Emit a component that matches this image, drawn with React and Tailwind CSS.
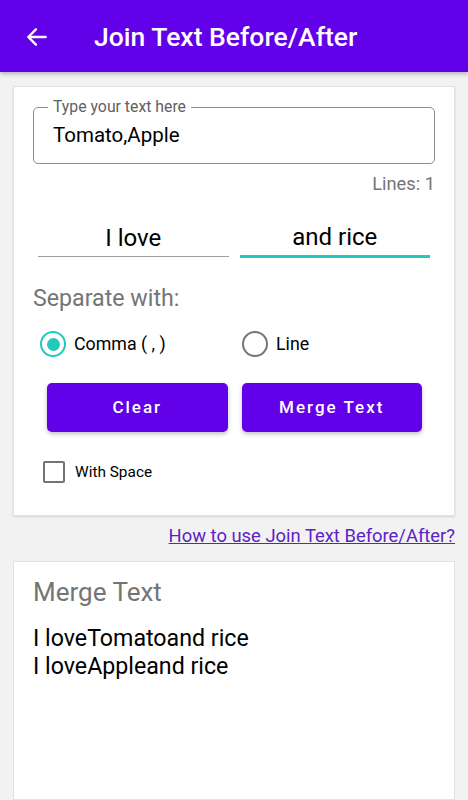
import React from "react";

export default function App() {
  const font = { fontFamily: "Roboto, 'Noto Sans', sans-serif" };
  return (
    <div className="w-[468px] h-[800px] overflow-hidden bg-[#f2f2f2] flex flex-col" style={font}>
      <header className="h-[72px] shrink-0 bg-[#6200ea] flex items-center shadow-[0_2px_4px_rgba(0,0,0,0.25)] relative z-10">
        <svg className="ml-[24px] mt-[1px]" width="26" height="26" viewBox="0 0 24 24" fill="none" stroke="white" strokeWidth="2.2" strokeLinecap="round" strokeLinejoin="round">
          <path d="M20 12H4.5" />
          <path d="M11 5l-7 7 7 7" />
        </svg>
        <h1 className="ml-[44px] mt-[2px] text-white text-[26.5px] font-medium">Join Text Before/After</h1>
      </header>

      <div className="mx-[13px] mt-[14px] bg-white border border-[#e2e2e2] shadow-[0_1px_2px_rgba(0,0,0,0.12)] px-[19px] pt-[20px] pb-[31px]">
        <fieldset className="border border-[#8c8c8c] rounded-[5px] h-[67px] px-[14px] -mt-[10px]">
          <legend className="px-[5px] text-[15.8px] text-[#616161] leading-[20px]">Type your text here</legend>
          <div className="text-[20.5px] text-black leading-[24px] mt-[6px] ml-[5px]">Tomato,Apple</div>
        </fieldset>
        <div className="text-right text-[18.3px] text-[#757575] mt-[8px] leading-[24px]">Lines: 1</div>

        <div className="flex gap-[11px] mt-[23px] px-[5px]">
          <div className="flex-1 border-b border-[#9e9e9e] h-[38px] flex items-center justify-center text-[24px] text-black">I love</div>
          <div className="flex-1 border-b-[3px] border-[#22c9bd] h-[39px] flex items-center justify-center text-[24px] text-black">and rice</div>
        </div>

        <div className="mt-[26px] text-[23.2px] text-[#757575] leading-[28px]">Separate with:</div>

        <div className="flex items-center mt-[19px] ml-[7px]">
          <div className="flex items-center w-[202px]">
            <div className="w-[26px] h-[26px] rounded-full border-[2.5px] border-[#22c9bd] flex items-center justify-center">
              <div className="w-[13px] h-[13px] rounded-full bg-[#22c9bd]" />
            </div>
            <span className="ml-[8px] text-[17.8px] text-black">Comma ( , )</span>
          </div>
          <div className="flex items-center">
            <div className="w-[26px] h-[26px] rounded-full border-[2.5px] border-[#757575]" />
            <span className="ml-[8px] text-[17.8px] text-black">Line</span>
          </div>
        </div>

        <div className="flex gap-[14px] mt-[25px] ml-[14px] mr-[13px]">
          <button className="w-[181px] h-[49px] pt-[2px] rounded-[5px] bg-[#6200ea] text-white text-[17px] font-medium tracking-[2px] shadow-[0_2px_4px_rgba(0,0,0,0.25)]">Clear</button>
          <button className="w-[181px] h-[49px] pt-[2px] rounded-[5px] bg-[#6200ea] text-white text-[17px] font-medium tracking-[2px] shadow-[0_2px_4px_rgba(0,0,0,0.25)]">Merge Text</button>
        </div>

        <div className="flex items-center mt-[29px] ml-[10px]">
          <div className="w-[22px] h-[22px] rounded-[2px] border-[2.5px] border-[#757575]" />
          <span className="ml-[10px] text-[15.4px] text-black">With Space</span>
        </div>
      </div>

      <div className="mx-[13px] mt-[7px] text-right leading-[26px]">
        <a href="#" className="text-[18.4px] text-[#5b22c6] underline">How to use Join Text Before/After?</a>
      </div>

      <div className="mx-[13px] mt-[11px] flex-1 bg-white border border-[#e2e2e2] px-[19px] pt-[14px]">
        <div className="text-[26px] text-[#757575] leading-[32px]">Merge Text</div>
        <div className="mt-[16px] text-[23.2px] text-black leading-[28px]">
          <div>I loveTomatoand rice</div>
          <div>I loveAppleand rice</div>
        </div>
      </div>
    </div>
  );
}
